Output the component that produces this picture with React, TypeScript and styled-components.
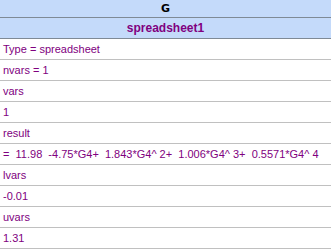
import styled, { createGlobalStyle } from "styled-components";

const GlobalStyle = createGlobalStyle`
  html, body {
    margin: 0;
    padding: 0;
    background: #ffffff;
  }
`;

const Sheet = styled.div`
  width: 331px;
  display: flex;
  flex-direction: column;
  font-family: "Liberation Sans", Tahoma, Arial, sans-serif;
  font-size: 11px;
`;

const HeaderCell = styled.div<{ $tall?: boolean; $purple?: boolean }>`
  height: ${(p) => (p.$tall ? "20px" : "17px")};
  border-bottom: 1px solid #7f8a96;
  background: #c4dafa;
  display: flex;
  align-items: center;
  justify-content: center;
  font-weight: bold;
  font-family: ${(p) => (p.$purple ? '"Liberation Sans", Arial' : '"DejaVu Sans", Tahoma')}, sans-serif;
  font-size: ${(p) => (p.$purple ? "12px" : "11px")};
  color: ${(p) => (p.$purple ? "#800080" : "#000000")};
`;

const Row = styled.div`
  height: 20px;
  border-bottom: 1px solid #c0c0c0;
  display: flex;
  align-items: center;
  padding-left: 3px;
  color: #800080;
  white-space: pre;
`;

const rows = [
  "Type = spreadsheet",
  "nvars = 1",
  "vars",
  "1",
  "result",
  "=  11.98  -4.75*G4+  1.843*G4^ 2+  1.006*G4^ 3+  0.5571*G4^ 4",
  "lvars",
  "-0.01",
  "uvars",
  "1.31",
];

export default function App() {
  return (
    <>
      <GlobalStyle />
      <Sheet>
        <HeaderCell>G</HeaderCell>
        <HeaderCell $tall $purple>spreadsheet1</HeaderCell>
        {rows.map((text, i) => (
          <Row key={i}>{text}</Row>
        ))}
      </Sheet>
    </>
  );
}
